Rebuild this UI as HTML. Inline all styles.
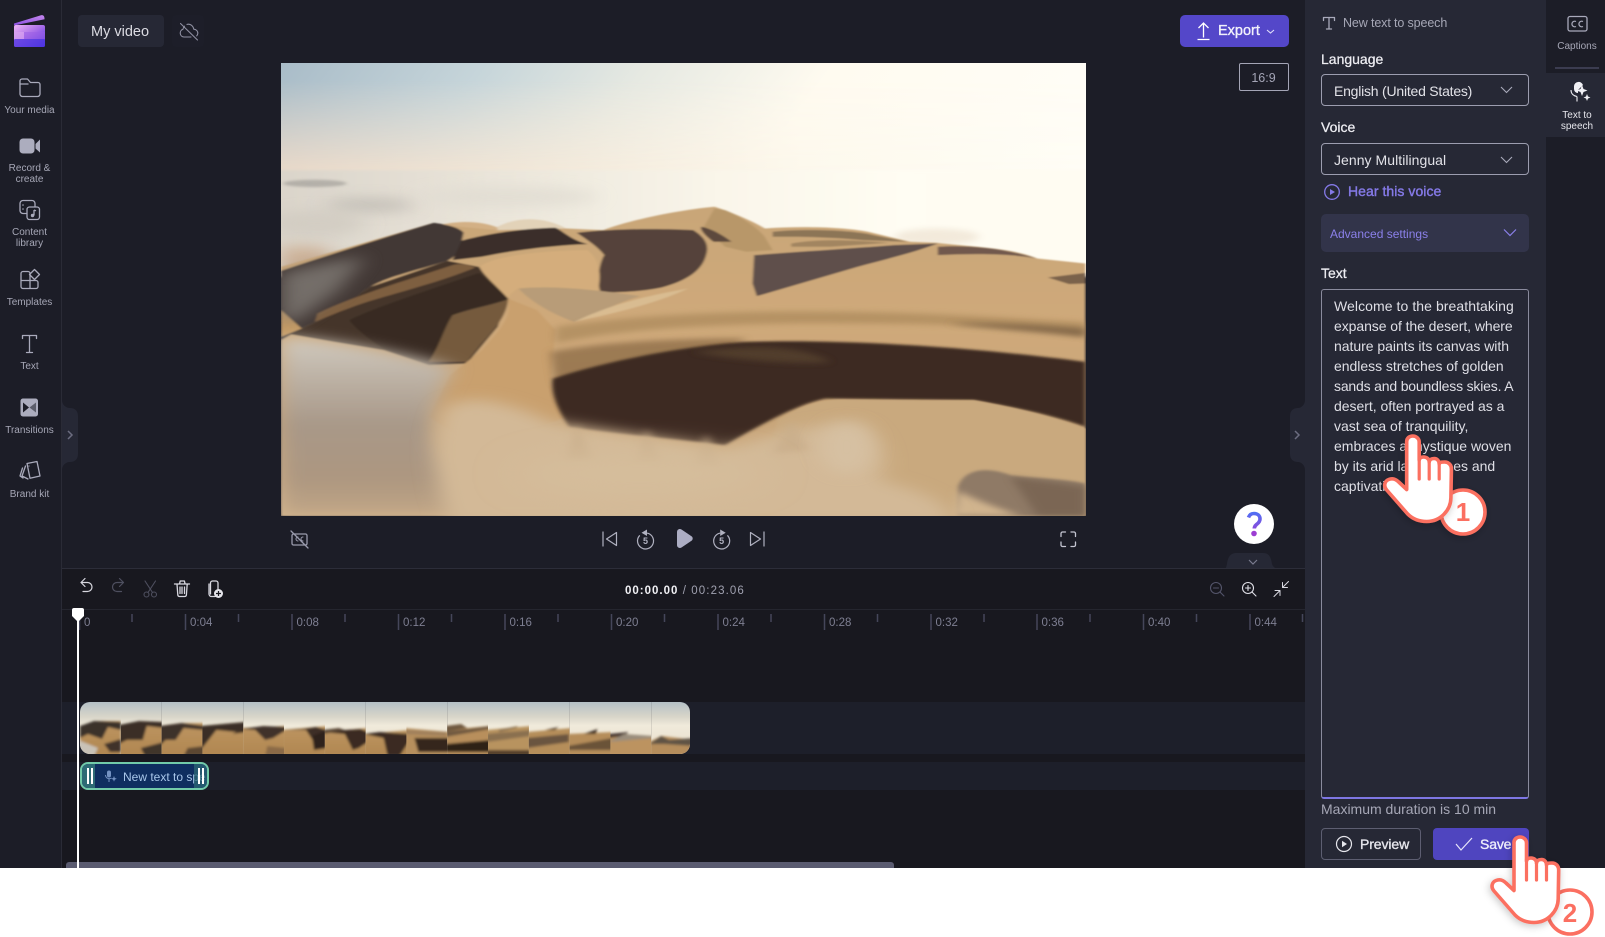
<!DOCTYPE html>
<html lang="en"><head><meta charset="utf-8"><title>Clipchamp</title>
<style>
html,body{margin:0;padding:0;background:#fff}
body{width:1605px;height:937px;position:relative;overflow:hidden;font-family:"Liberation Sans",sans-serif}
.a{position:absolute}
.t{position:absolute;white-space:nowrap}
.c{text-align:center;transform:translateX(-50%)}
.rl{font-size:10px;line-height:11px;color:#a6a7b6}
svg{position:absolute;overflow:visible}
.s{fill:none;stroke:#a9aabb;stroke-width:1.3;stroke-linecap:round;stroke-linejoin:round}
.l{font-size:14px;color:#eeeef3;line-height:18px;-webkit-text-stroke:.25px #eeeef3}
.sel{position:absolute;left:1321px;width:206px;height:30px;border:1px solid #9c9daf;border-radius:4px}
.tl{font-size:11.5px;color:#7e7f92;line-height:14px}
.ta{font-size:14px;line-height:20px;color:#dfdfe6;left:1334px}
</style></head><body>
<div class="a" style="left:0;top:0;width:1605px;height:868px;background:#1c1d27;overflow:hidden">
<div class="a" style="left:61px;top:0;width:1px;height:868px;background:#2a2b36"></div>

<svg style="left:0;top:0" width="61" height="60"><defs>
<linearGradient id="lg1" x1="0" y1="0" x2="1" y2="1"><stop offset="0" stop-color="#f0b6f5"/><stop offset=".5" stop-color="#a66be8"/><stop offset="1" stop-color="#3f2be0"/></linearGradient>
<linearGradient id="lg2" x1="0" y1="1" x2="1" y2="0"><stop offset="0" stop-color="#8a4fe0"/><stop offset="1" stop-color="#c486ee"/></linearGradient></defs>
<path d="M14 23.500L41 15.300c1.600-.5 2.900.2 3.300 1.800l.3 2.200L14 25.500z" fill="url(#lg2)"/>
<rect x="14" y="25" width="31" height="22" rx="2" fill="url(#lg1)"/>
<rect x="24" y="32" width="21" height="7" fill="#9a5fe6" opacity=".55"/>
<rect x="14" y="39" width="31" height="8" rx="1.500" fill="#5037e2" opacity=".75"/>
<rect x="14" y="32" width="10" height="7" fill="#d9a2f1" opacity=".7"/></svg>

<svg style="left:0;top:0" width="61" height="500">
<path class="s" d="M20 81a2 2 0 0 1 2-2h5.500l3 3.500H38a2 2 0 0 1 2 2V94a2.500 2.500 0 0 1-2.500 2.500h-15A2.500 2.500 0 0 1 20 94z"/>
<path class="s" d="M20 84h8"/>
<rect x="19.500" y="138.500" width="15" height="15" rx="3.500" fill="#acadbe"/><path d="M35.500 144l4.500-4.500v13l-4.500-4z" fill="#acadbe"/>
<rect class="s" x="20" y="200.500" width="15" height="13" rx="3"/><rect x="27" y="207" width="12.500" height="12.500" rx="2.500" fill="#1c1d27" stroke="#a9aabb" stroke-width="1.300"/>
<path d="M34 210v5.500" stroke="#a9aabb" stroke-width="1.300"/><circle cx="32.500" cy="215.500" r="1.700" fill="#a9aabb"/><path d="M34 210l2 .8" stroke="#a9aabb" stroke-width="1.300"/>
<circle cx="23" cy="205" r=".8" fill="#a9aabb"/><circle cx="23" cy="209" r=".8" fill="#a9aabb"/>
<path class="s" d="M30 280.500v-7a2 2 0 0 0-2-2h-5a2 2 0 0 0-2 2v13a2 2 0 0 0 2 2h13a2 2 0 0 0 2-2v-4a2 2 0 0 0-2-2zM30 280.500H21M30 280.500v8"/>
<path class="s" d="M34.500 269.500l5 5-5 5-5-5z"/>
<path class="s" d="M22.500 338.500v-3h14v3M29.500 335.500v17M26.500 352.500h6"/>
<rect x="20.500" y="398.500" width="17.500" height="18" rx="2.500" fill="#acadbe"/>
<path d="M23 402.500l6 5-6 5z" fill="#1c1d27"/><path d="M36 402.500l-6.500 5 6.500 5z" fill="#1c1d27" opacity=".55"/>
<path class="s" d="M27 463.500l10-2 3 14.500-10 2.200zM25.500 466l-3.500 10 6 3M22.500 468l-2.500 8 3 2"/>
<circle cx="29" cy="466" r=".6" fill="#a9aabb"/>
</svg>
<div class="t c rl" style="left:29.500px;top:105px">Your media</div>
<div class="t c rl" style="left:29.500px;top:163px">Record &amp;<br>create</div>
<div class="t c rl" style="left:29.500px;top:227px">Content<br>library</div>
<div class="t c rl" style="left:29.500px;top:297px">Templates</div>
<div class="t c rl" style="left:29.500px;top:361px">Text</div>
<div class="t c rl" style="left:29.500px;top:425px">Transitions</div>
<div class="t c rl" style="left:29.500px;top:489px">Brand kit</div>

<svg style="left:62px;top:400px" width="18" height="70"><path d="M0 0c0 5 4 8 8 8 5 0 8 3 8 8v38c0 5-3 8-8 8-4 0-8 3-8 8z" fill="#262835"/><path d="M6 31l4 4-4 4" fill="none" stroke="#6c6d80" stroke-width="1.500"/></svg>
<svg style="left:1290px;top:400px" width="16" height="70"><path d="M15 0c0 5-4 8-7 8-5 0-8 3-8 8v38c0 5 3 8 8 8 3 0 7 3 7 8z" fill="#262835"/><path d="M5 31l4 4-4 4" fill="none" stroke="#6c6d80" stroke-width="1.500"/></svg>

<div class="a" style="left:78px;top:15px;width:86px;height:32px;background:#262835;border-radius:4px"></div>
<div class="t" style="left:91px;top:23px;font-size:14.500px;line-height:18px;color:#dcdce3">My video</div>
<div class="a" style="left:172px;top:15px;width:32px;height:32px;background:#1d1e29;border-radius:4px"></div>
<svg style="left:0;top:0" width="240" height="60"><path class="s" style="stroke:#8f90a2;stroke-width:1.100" d="M191 37h-7a4 4 0 0 1-1-7.800c.2-1.200.7-2.200 1.500-3M187 24.400c3-.8 6 1 6.800 4.800 2.800.3 4.200 2.200 4 4.300-.1 1-.5 1.800-1.100 2.400M180.500 23.500l17 16.500"/></svg>

<div class="a" style="left:1180px;top:15px;width:109px;height:32px;background:#5447c9;border-radius:5px"></div>
<svg style="left:1180px;top:15px" width="109" height="32"><path d="M23.500 22.500V9M18.500 13l5-5 5 5M17.500 24.500h12" fill="none" stroke="#fff" stroke-width="1.300"/><path d="M87 15l3.500 3 3.500-3" fill="none" stroke="#e0defa" stroke-width="1.100"/></svg>
<div class="t" style="left:1218px;top:23px;font-size:14.500px;line-height:17px;color:#f2f1fb;-webkit-text-stroke:.35px #f2f1fb">Export</div>
<div class="a" style="left:1239px;top:63px;width:48px;height:26px;border:1px solid #a4a5b6;border-radius:2px"></div>
<div class="t c" style="left:1263.500px;top:71px;font-size:12.500px;line-height:14px;color:#a4a5b6">16:9</div>

<!-- PHOTO -->
<svg style="left:281px;top:63px" width="805" height="453" viewBox="21 39 1521 1358" preserveAspectRatio="none">
<defs>
<clipPath id="pc"><rect x="21" y="39" width="1521" height="1358"/></clipPath>
<linearGradient id="sky" x1="0" y1="0" x2="1" y2=".12"><stop offset="0" stop-color="#a9bcc8"/><stop offset=".25" stop-color="#c6d5da"/><stop offset=".45" stop-color="#e6e9e2"/><stop offset=".68" stop-color="#fffbf0"/><stop offset="1" stop-color="#fffdf6"/></linearGradient>
<linearGradient id="fog" x1="0" y1="0" x2="1" y2="0"><stop offset="0" stop-color="#d8d2c8"/><stop offset=".3" stop-color="#ebe6db"/><stop offset=".55" stop-color="#faf6ea"/><stop offset=".75" stop-color="#fffdf3"/><stop offset="1" stop-color="#fffcf2"/></linearGradient>
<linearGradient id="fogh" x1="0" y1="0" x2="1" y2="0"><stop offset="0" stop-color="#ead9c8"/><stop offset=".35" stop-color="#f3e9da"/><stop offset=".65" stop-color="#fdf8ec"/><stop offset="1" stop-color="#fffdf5"/></linearGradient>
<linearGradient id="mg" gradientUnits="userSpaceOnUse" x1="0" y1="90" x2="0" y2="370"><stop offset="0" stop-color="#fff" stop-opacity="0"/><stop offset="1" stop-color="#fff"/></linearGradient>
<mask id="skm" maskUnits="userSpaceOnUse" x="0" y="0" width="1600" height="500"><rect x="0" y="0" width="1600" height="500" fill="url(#mg)"/></mask>
<linearGradient id="sand" gradientUnits="userSpaceOnUse" x1="0" y1="500" x2="0" y2="1397"><stop offset="0" stop-color="#c9a678"/><stop offset=".35" stop-color="#cfa97a"/><stop offset=".7" stop-color="#c8a579"/><stop offset="1" stop-color="#d7b88f"/></linearGradient>
<linearGradient id="lfog" gradientUnits="userSpaceOnUse" x1="0" y1="850" x2="0" y2="1397"><stop offset="0" stop-color="#d2ccc1"/><stop offset=".25" stop-color="#bcb1a4"/><stop offset=".5" stop-color="#a89888"/><stop offset=".8" stop-color="#ad9780"/><stop offset="1" stop-color="#c2a787"/></linearGradient>
<filter id="b2" filterUnits="userSpaceOnUse" x="-200" y="-200" width="2000" height="1900"><feGaussianBlur stdDeviation="2.500"/></filter>
<filter id="b3" filterUnits="userSpaceOnUse" x="-200" y="-200" width="2000" height="1900"><feGaussianBlur stdDeviation="4"/></filter>
<filter id="b8" filterUnits="userSpaceOnUse" x="-200" y="-200" width="2000" height="1900"><feGaussianBlur stdDeviation="9"/></filter>
<filter id="b20" filterUnits="userSpaceOnUse" x="-200" y="-200" width="2000" height="1900"><feGaussianBlur stdDeviation="20"/></filter>
<filter id="b40" filterUnits="userSpaceOnUse" x="-200" y="-200" width="2000" height="1900"><feGaussianBlur stdDeviation="40"/></filter>
</defs>
<g clip-path="url(#pc)">
<rect x="21" y="39" width="1521" height="400" fill="url(#sky)"/>
<rect x="21" y="39" width="1521" height="400" fill="url(#fogh)" mask="url(#skm)"/>
<rect x="-40" y="360" width="1640" height="320" fill="url(#fog)" filter="url(#b3)"/>
<ellipse cx="85" cy="400" rx="60" ry="11" fill="#8c8a86" filter="url(#b3)" opacity=".5"/>
<ellipse cx="190" cy="465" rx="85" ry="20" fill="#bbb7b0" filter="url(#b20)" opacity=".8"/>
<ellipse cx="450" cy="440" rx="170" ry="30" fill="#e0dcd2" filter="url(#b20)" opacity=".8"/>
<ellipse cx="90" cy="520" rx="90" ry="40" fill="#cfc9bf" filter="url(#b20)" opacity=".7"/>
<path d="M21 590L100 590 130 640 21 680z" fill="#c9a88a" filter="url(#b20)" opacity=".8"/>
<ellipse cx="1260" cy="560" rx="80" ry="25" fill="#f3eadb" filter="url(#b8)"/>
<g filter="url(#b2)">
<path d="M320 525C360 510 410 512 440 540L440 560 320 560z" fill="#d3b085"/>
<path d="M430 530C470 498 520 500 560 535L560 560 430 560z" fill="#e2d2b8"/>
<path d="M21 650L305 520 360 530 430 540 560 535 630 540C680 510 770 480 840 470 880 490 920 520 935 535 1000 528 1080 530 1130 545L1210 575 1260 578C1320 590 1400 592 1450 625L1541 640V1397H21Z" fill="url(#sand)"/>
<path d="M860 480C890 500 920 530 935 560L950 600 900 605 860 590 820 530 840 475z" fill="#b89769"/>
<path d="M950 545C1010 535 1100 540 1140 555L1205 575 1120 570C1050 560 1000 560 950 560z" fill="#8c7457"/>
<path d="M985 580C1040 565 1100 570 1170 578L1060 590 985 590z" fill="#a28560"/>
<path d="M30 850L60 835 100 805 190 710 335 632 395 650 450 745 430 830 372 940 300 945 215 900 120 875Z" fill="#443529"/>
<path d="M21 662C120 610 220 560 310 518 340 525 360 535 366 548L360 590C355 610 345 625 335 632 280 660 220 680 190 710 160 740 130 780 100 805L60 835 21 870Z" fill="#423936"/>
<path d="M362 572C400 555 470 535 540 533 555 545 570 570 600 582 540 585 460 600 400 620L345 630Z" fill="#3a2f2a"/>
<path d="M580 548C650 535 740 535 800 540 820 560 830 580 825 610 818 660 790 690 740 712 700 725 650 728 625 725 615 690 625 630 632 615 620 590 600 570 580 548Z" fill="#54433b"/>
<path d="M815 530C835 535 860 560 872 575L838 575C825 560 812 540 815 530Z" fill="#5d4a3c"/>
<path d="M915 615C1000 605 1100 595 1180 585L1262 580C1220 605 1170 625 1110 650L920 738 912 700Z" fill="#5f4f4b"/>
<path d="M1262 590C1310 585 1380 590 1448 625 1400 610 1330 610 1262 615Z" fill="#71584d"/>
<path d="M1470 682L1541 668V700L1510 702Z" fill="#7a624b"/>
<path d="M90 790C160 735 260 690 345 645 360 638 378 645 388 652 340 685 260 720 190 752 150 772 115 795 85 815Z" fill="#7e5e41"/>
<path d="M150 810C200 770 300 720 395 668 410 690 435 720 450 745 400 770 360 780 345 795 330 830 320 890 300 935 270 925 235 905 215 895 190 870 165 840 150 810Z" fill="#382c24"/>
<path d="M345 795C380 775 420 765 450 748 448 790 430 830 400 880L372 935 300 935C320 890 330 830 345 795Z" fill="#755a3e"/>
<path d="M21 780L60 835 21 860Z" fill="#c79a60"/>
<path d="M396 650C420 620 500 602 600 600 632 640 622 700 620 725 560 710 500 710 468 715 455 730 450 740 450 745 430 710 400 670 396 650Z" fill="#d4ad7b"/>
<path d="M450 745C456 800 440 830 400 900L340 975 300 1100 400 1200 560 1100 530 1000 540 840 505 780Z" fill="#c9a06e"/>
<path d="M470 715C540 705 620 720 700 738 660 755 620 790 575 815 530 790 490 750 470 715Z" fill="#b89c78"/>
<path d="M575 815C620 780 680 745 790 715 730 760 650 790 575 815Z" fill="#dcc097" opacity=".8"/>
</g>
<path d="M21 670L100 640 180 620 130 720 60 800 21 830z" fill="#85807a" filter="url(#b20)" opacity=".75"/>
<path d="M540 830C700 790 900 780 1100 785 1300 790 1450 810 1541 815V860C1400 820 1200 820 1000 820 800 825 650 840 540 880Z" fill="#a78658" filter="url(#b8)" opacity=".65"/>
<path d="M1280 820C1360 815 1460 825 1541 835V860C1450 845 1360 835 1280 820Z" fill="#6f573d" filter="url(#b8)" opacity=".7"/>
<path d="M530 905C650 870 800 865 900 865L800 965 540 1005Z" fill="#8c6c47" filter="url(#b8)" opacity=".75"/>
<path d="M535 985C650 925 800 885 900 875 1100 865 1350 895 1541 935V1130C1490 1100 1420 1075 1330 1050L1050 1045C1000 1060 930 1120 860 1185 760 1165 640 1150 565 1130 540 1070 530 1020 535 985Z" fill="#3d2c20" filter="url(#b3)"/>
<path d="M800 905C900 885 1000 880 1060 935 1000 945 880 930 800 905Z" fill="#57432f" filter="url(#b8)" opacity=".8"/>
<path d="M960 1110C1000 1070 1040 1045 1090 1048 1200 1050 1300 1050 1330 1050 1420 1075 1490 1105 1541 1135V1397H900Z" fill="#c9a97e" filter="url(#b2)"/>
<path d="M1300 1310C1310 1260 1350 1245 1400 1275 1450 1285 1500 1285 1541 1300V1397H1300Z" fill="#8f7a66" filter="url(#b3)"/>
<path d="M1300 1320C1320 1340 1370 1370 1420 1397H1290Z" fill="#d0b48e" filter="url(#b8)"/>
<path d="M1400 1280C1450 1290 1500 1300 1541 1310V1397H1450Z" fill="#6e5a4a" filter="url(#b8)" opacity=".6"/>
<!-- fog -->
<path d="M21 860C120 870 220 900 345 950 310 1040 290 1130 330 1220 370 1300 430 1397 450 1397H21Z" fill="url(#lfog)" filter="url(#b20)"/>
<path d="M330 1070C390 1020 470 1070 540 1120 640 1140 760 1175 860 1205 930 1160 1020 1110 1120 1125 1160 1170 1170 1240 1150 1290 1230 1320 1290 1360 1290 1420H340C310 1300 300 1150 330 1070Z" fill="#d3b997" filter="url(#b20)"/>
<path d="M560 1230L580 1120 610 1230ZM690 1240L712 1135 740 1240ZM800 1250L825 1150 850 1250ZM950 1210L985 1110 1020 1200Z" fill="#c9ae8b" filter="url(#b8)" opacity=".8"/>
<ellipse cx="1090" cy="1190" rx="50" ry="80" fill="#d8c4a8" filter="url(#b20)" opacity=".65"/>
<ellipse cx="700" cy="1270" rx="230" ry="70" fill="#d5bd9b" filter="url(#b40)"/>
</g></svg>

<!-- player controls -->
<svg style="left:0;top:0" width="1300" height="568">
<g style="stroke:#9a9bad" class="s"><rect x="292" y="534" width="15" height="11" rx="1.500"/><path d="M291 531l17 17"/><path d="M298 537a2 2 0 1 0 0 4M303 537a2 2 0 1 0 0 4" stroke-width="1"/></g>
<g class="s" style="stroke:#b0b1c0;stroke-width:1.200"><path d="M603 532v14M616.500 532.500v13l-10-6.500z"/>
<path d="M750.500 532.500v13l10-6.500zM764 532v14"/>
<path d="M647.500 533.200A8 8 0 1 1 639.500 535.700"/><path d="M719.700 533.200A8 8 0 1 0 727.700 535.700"/></g>
<path d="M647 529.500l-5.500 3.200 5.500 3.300z" fill="#b0b1c0"/><path d="M720.200 529.500l5.500 3.200-5.500 3.300z" fill="#b0b1c0"/>
<path d="M677 532c0-2.500 2.500-3.700 4.500-2.500l10 6.800c1.600 1.100 1.600 3.300 0 4.400l-10 6.800c-2 1.200-4.500 0-4.500-2.500z" fill="#acadc3"/>
<g class="s" style="stroke:#c4c5d2"><path d="M1061 536.500v-3a1.500 1.500 0 0 1 1.500-1.500h3M1071 532h3a1.500 1.500 0 0 1 1.500 1.500v3M1075.500 542v3a1.500 1.500 0 0 1-1.500 1.500h-3M1065.500 546.500h-3a1.500 1.500 0 0 1-1.500-1.500v-3"/></g>
</svg>
<div class="t c" style="left:645.500px;top:536px;font-size:9px;line-height:10px;font-weight:bold;color:#b0b1c0">5</div>
<div class="t c" style="left:721.700px;top:536px;font-size:9px;line-height:10px;font-weight:bold;color:#b0b1c0">5</div>

<!-- help -->
<div class="a" style="left:1234px;top:504px;width:40px;height:40px;border-radius:50%;background:#fff"></div>
<svg style="left:1234px;top:504px" width="40" height="40"><defs><linearGradient id="q" gradientUnits="userSpaceOnUse" x1="0" y1="8" x2="0" y2="32"><stop offset="0" stop-color="#4f70f5"/><stop offset="1" stop-color="#a03ad0"/></linearGradient></defs>
<path d="M14.500 13.500C15.500 10.500 17.500 9.500 20 9.500c3.500 0 6 2.200 6 5.500 0 3-2 4.200-3.500 5.500-1.200 1-2.200 2-2.200 4" fill="none" stroke="url(#q)" stroke-width="3.600"/><circle cx="20" cy="29.500" r="2.800" fill="#9c3dd2"/></svg>
<svg style="left:1222px;top:552px" width="62" height="17"><path d="M0 17c5 0 4-2 5-5 1-7 3-11 10-11h26c6 0 8 4 9 11 1 3 3 5 9 5z" fill="#262835"/><path d="M27 8l4 4 4-4" fill="none" stroke="#7a7b8e" stroke-width="1.200"/></svg>

<!-- timeline -->
<div class="a" style="left:62px;top:568px;width:1243px;height:300px;background:#18181f"></div>
<div class="a" style="left:62px;top:568px;width:1243px;height:1px;background:#2c2d39"></div>
<div class="a" style="left:62px;top:609px;width:1243px;height:1px;background:#25262f"></div>
<div class="a" style="left:62px;top:702px;width:1243px;height:52px;background:#1d1f2a"></div>
<div class="a" style="left:62px;top:762px;width:1243px;height:28px;background:#1d1f2a"></div>
<svg style="left:0;top:560px" width="1305" height="50">
<g class="s" style="stroke:#d8d8e0;stroke-width:1.200"><path d="M81 22.500l4-4M81 22.500l4 4M81 22.500h6.500a4.500 4.500 0 0 1 0 9H83"/></g>
<g class="s" style="stroke:#4e4f5f;stroke-width:1.200"><path d="M123.500 22.500l-4-4M123.500 22.500l-4 4M123.500 22.500H117a4.500 4.500 0 0 0 0 9h4.500"/></g>
<g class="s" style="stroke:#4e4f5f;stroke-width:1.100"><path d="M145 21l7.500 11.500M155.500 21L148 32.500"/><circle cx="146.500" cy="34.500" r="2.500"/><circle cx="154" cy="34.500" r="2.500"/></g>
<g class="s" style="stroke:#d8d8e0"><path d="M174.500 24h15M177 24l.8 11a1.800 1.800 0 0 0 1.800 1.500h5a1.800 1.800 0 0 0 1.800-1.500l.8-11M179.500 24l.7-3h4.200l.7 3M180 27v6.500M182 27v6.500M184.500 27v6.500"/></g>
<g class="s" style="stroke:#d8d8e0"><path d="M215 36.500h-3.500a2.500 2.500 0 0 1-2.500-2.500V24M210.500 34V23a2 2 0 0 1 2-2h3.500a2 2 0 0 1 2 2v6"/></g>
<circle cx="218.500" cy="33.500" r="4.500" fill="#e4e4ea"/><path d="M218.500 31v5M216 33.500h5" stroke="#18181f" stroke-width="1.200"/>
<g class="s" style="stroke:#53546a;stroke-width:1.100"><circle cx="1216" cy="28" r="5.500"/><path d="M1213.500 28h5M1220 32l4 4"/></g>
<g class="s" style="stroke:#e0e0e8;stroke-width:1.100"><circle cx="1248" cy="28" r="5.500"/><path d="M1245.500 28h5M1248 25.500v5M1252 32l4 4"/></g>
<g class="s" style="stroke:#d8d8e0;stroke-width:1"><path d="M1288.500 21.500l-6 6M1282.500 22.500v5h5M1274 36.500l6-6M1275 30.500h5v5"/></g>
</svg>
<div class="t" style="left:625px;top:584px;font-size:11.500px;line-height:14px;letter-spacing:1.100px;color:#a0a1b0"><span style="color:#f1f1f5;font-weight:bold;letter-spacing:1px">00:00.00</span> / 00:23.06</div>

<svg style="left:0;top:610px" width="1305" height="24"><g stroke="#45465a" stroke-width="1.500">
<path d="M79.500 5v15M185.500 4v16M292 4v16M398.500 4v16M505 4v16M611.500 4v16M718 4v16M824.500 4v16M931 4v16M1037 4v16M1143.500 4v16M1250 4v16"/>
<path d="M132 4v8M238.500 4v8M345 4v8M451.500 4v8M558 4v8M664.500 4v8M771 4v8M877.500 4v8M984 4v8M1090 4v8M1196.500 4v8M1302.500 4v8"/></g></svg>
<div class="t tl" style="left:84px;top:615.500px">0</div>
<div class="t tl" style="left:190px;top:615.500px">0:04</div><div class="t tl" style="left:296.500px;top:615.500px">0:08</div><div class="t tl" style="left:403px;top:615.500px">0:12</div><div class="t tl" style="left:509.500px;top:615.500px">0:16</div><div class="t tl" style="left:616px;top:615.500px">0:20</div><div class="t tl" style="left:722.500px;top:615.500px">0:24</div><div class="t tl" style="left:829px;top:615.500px">0:28</div><div class="t tl" style="left:935.500px;top:615.500px">0:32</div><div class="t tl" style="left:1041.500px;top:615.500px">0:36</div><div class="t tl" style="left:1148px;top:615.500px">0:40</div><div class="t tl" style="left:1254.500px;top:615.500px">0:44</div>

<!-- clip -->
<svg style="left:80px;top:702px" width="610" height="52" viewBox="0 0 610 52"><defs>
<clipPath id="cc"><rect width="610" height="52" rx="10"/></clipPath>
<linearGradient id="ts" x1="0" y1="0" x2="0" y2="1"><stop offset="0" stop-color="#b4c0c6"/><stop offset=".28" stop-color="#d8d5c9"/><stop offset=".45" stop-color="#f0eadb"/><stop offset="1" stop-color="#e9dfcb"/></linearGradient>
<linearGradient id="ss" x1="0" y1="0" x2="0" y2="1"><stop offset="0" stop-color="#bd9561"/><stop offset="1" stop-color="#b08650"/></linearGradient>
<filter id="tb" x="-10%" y="-10%" width="120%" height="120%"><feGaussianBlur stdDeviation="1.400"/></filter>
<clipPath id="t0"><rect width="41" height="52"/></clipPath>
</defs>
<g clip-path="url(#cc)">
<g clip-path="url(#t0)"><rect width="41" height="52" fill="url(#ts)"/><g filter="url(#tb)"><path d="M0 26L14 19 41 19V54H0Z" fill="url(#ss)"/><path d="M0 24L14 19 41 20V28L28 25 22 37 8 32 0 36Z" fill="#3b322c"/><path d="M24 42L41 37V50H30Z" fill="#40332a"/><path d="M-2 38L18 46 14 54H-2Z" fill="#c9c2b7"/></g></g>
<g transform="translate(40.800)" clip-path="url(#t0)"><rect width="41" height="52" fill="url(#ts)"/><g filter="url(#tb)"><path d="M-2 24L18 19 43 20V54H-2Z" fill="url(#ss)"/><path d="M-2 23L18 19 43 20V26L26 24 22 38 6 38-2 42Z" fill="#3b2f28"/><path d="M20 46L43 40V54H24Z" fill="#41342a"/></g></g>
<g transform="translate(81.600)" clip-path="url(#t0)"><rect width="41" height="52" fill="url(#ts)"/><g filter="url(#tb)"><path d="M-2 24L20 21 43 21V54H-2Z" fill="url(#ss)"/><path d="M-2 24L20 21 43 24V28L22 26 14 38 4 38-2 44Z" fill="#3d3029"/><path d="M26 46L43 44V54H22Z" fill="#5b4633"/></g></g>
<g transform="translate(122.400)" clip-path="url(#t0)"><rect width="41" height="52" fill="url(#ts)"/><g filter="url(#tb)"><path d="M-2 24L43 20V54H-2Z" fill="url(#ss)"/><path d="M-2 24L20 22 43 20V26L34 30 14 28 3 42-2 48Z" fill="#3a2e27"/><path d="M30 32L43 26V30Z" fill="#2e241e"/></g></g>
<g transform="translate(163.200)" clip-path="url(#t0)"><rect width="41" height="52" fill="url(#ts)"/><g filter="url(#tb)"><path d="M-2 26L43 24V54H-2Z" fill="url(#ss)"/><path d="M-2 27L20 24 43 25V28L30 36 22 38 12 28Z" fill="#3f3229"/><path d="M24 44L43 46V54H22Z" fill="#8b6b46"/></g></g>
<g transform="translate(204)" clip-path="url(#t0)"><rect width="41" height="52" fill="url(#ts)"/><g filter="url(#tb)"><path d="M-2 28L43 24V54H-2Z" fill="url(#ss)"/><path d="M-2 28L18 27 32 25 43 28V36L30 40 22 28Z" fill="#3c2e25"/><path d="M28 34L43 28V46L30 48Z" fill="#2f241d"/></g></g>
<g transform="translate(244.800)" clip-path="url(#t0)"><rect width="41" height="52" fill="url(#ts)"/><g filter="url(#tb)"><path d="M-2 30L43 26V54H-2Z" fill="url(#ss)"/><path d="M-2 30L20 28 36 27 43 30V40L34 46 28 48 20 32Z" fill="#3a2c23"/><path d="M-2 28L14 26 20 28-2 32Z" fill="#5a4736"/></g></g>
<g transform="translate(285.600)" clip-path="url(#t0)"><rect width="41" height="52" fill="url(#ts)"/><g filter="url(#tb)"><path d="M-2 32L43 28V54H-2Z" fill="url(#ss)"/><path d="M-2 32L14 30 43 32V40L34 54H22L18 36Z" fill="#3a2c22"/></g></g>
<g transform="translate(326.400)" clip-path="url(#t0)"><rect width="41" height="52" fill="url(#ts)"/><g filter="url(#tb)"><path d="M-2 26L43 30V54H-2Z" fill="#b68f5d"/><path d="M8 36L43 36V50H12Z" fill="#35281e"/><path d="M-2 28L40 30V34L-2 32Z" fill="#a0805c"/></g></g>
<g transform="translate(367.200)" clip-path="url(#t0)"><rect width="41" height="52" fill="url(#ts)"/><g filter="url(#tb)"><path d="M-2 28L43 24V54H-2Z" fill="#b88f5c"/><path d="M-2 42L43 38V50H-2Z" fill="#2f2319"/><path d="M-2 24L14 22 20 26-2 30ZM-2 30L43 24V27L-2 35Z" fill="#6f593f"/></g></g>
<g transform="translate(408)" clip-path="url(#t0)"><rect width="41" height="52" fill="url(#ts)"/><g filter="url(#tb)"><path d="M-2 28L43 24V54H-2Z" fill="#b8935f"/><path d="M-2 48H43V54H-2Z" fill="#55402c"/><path d="M10 28L30 24 28 26 12 30ZM-2 32L43 28V34L-2 40Z" fill="#8a7050"/></g></g>
<g transform="translate(448.800)" clip-path="url(#t0)"><rect width="41" height="52" fill="url(#ts)"/><g filter="url(#tb)"><path d="M-2 30L43 26V54H-2Z" fill="#b58e5a"/><path d="M-2 36L40 32V40L-2 46Z" fill="#6b5540"/><path d="M16 28L30 25 26 28Z" fill="#4b3b2d"/></g></g>
<g transform="translate(489.600)" clip-path="url(#t0)"><rect width="41" height="52" fill="url(#ts)"/><g filter="url(#tb)"><path d="M-2 32L43 30V54H-2Z" fill="#b58d5a"/><path d="M-2 44L43 36V48H-2Z" fill="#6b5238"/><path d="M14 32L28 27 26 32Z" fill="#3f3127"/></g></g>
<g transform="translate(530.400)" clip-path="url(#t0)"><rect width="41" height="52" fill="url(#ts)"/><g filter="url(#tb)"><path d="M-2 34L43 34V54H-2Z" fill="#bc9360"/><path d="M-2 32L18 30 14 34-2 36Z" fill="#463730"/><path d="M14 32L43 34V36L-2 40Z" fill="#9a8d7b"/></g></g>
<g transform="translate(571.200)" clip-path="url(#t0)"><rect width="41" height="52" fill="url(#ts)"/><g filter="url(#tb)"><path d="M-2 40L10 34 43 38V54H-2Z" fill="#b58d5b"/><path d="M-2 42L10 34 18 38 43 36V44L14 42Z" fill="#5f5245"/></g></g>
</g></svg>

<!-- text clip -->
<div class="a" style="left:80px;top:762px;width:129px;height:28px;box-sizing:border-box;border:2px solid #72caa9;border-radius:8px;overflow:hidden;background:#0f2e60">
<div class="t" style="left:41px;top:6px;font-size:12px;line-height:14px;color:#a9c7ea;width:84px;overflow:hidden">New text to spe</div>
<div class="a" style="left:0;top:0;width:13px;height:24px;background:#2d6a75"></div>
<div class="a" style="right:0;top:0;width:13px;height:24px;background:rgba(45,106,117,.72)"></div>
<div class="a" style="left:5px;top:4px;width:2px;height:16px;background:#fff"></div><div class="a" style="left:9px;top:4px;width:2px;height:16px;background:#fff"></div>
<div class="a" style="left:116px;top:4px;width:2px;height:16px;background:#fff"></div><div class="a" style="left:120px;top:4px;width:2px;height:16px;background:#fff"></div>
<svg style="left:22px;top:4px" width="16" height="16"><path d="M5 2.500a2 2 0 0 1 2 2v3a2 2 0 0 1-4 0v-3a2 2 0 0 1 2-2z" fill="#7492c2"/><path d="M1.500 7a3.800 3.800 0 0 0 6 3M5 11v3" stroke="#7492c2" fill="none"/><path d="M10 8l.8 2 2 .8-2 .8-.8 2-.8-2-2-.8 2-.8z" fill="#7492c2"/></svg>
</div>

<div class="a" style="left:77px;top:618px;width:2px;height:250px;background:#fff"></div>
<svg style="left:72px;top:608px" width="12" height="14"><path d="M0 2a2 2 0 0 1 2-2h8a2 2 0 0 1 2 2v6l-6 6-6-6z" fill="#fff"/></svg>
<div class="a" style="left:66px;top:862px;width:828px;height:6px;background:#5a5b70;border-radius:3px 3px 0 0"></div>
<div class="a" style="left:77px;top:862px;width:2px;height:6px;background:#fff"></div>

<!-- right panel -->
<div class="a" style="left:1305px;top:0;width:241px;height:868px;background:#262835"></div>
<svg style="left:1305px;top:0" width="40" height="40"><path class="s" d="M18.500 20.500v-3h11v3M24 17.500v11.500M21.500 29h5"/></svg>
<div class="t" style="left:1343px;top:16px;font-size:12.500px;line-height:15px;letter-spacing:-.12px;color:#a6a7b6">New text to speech</div>
<div class="t l" style="left:1321px;top:50px">Language</div>
<div class="sel" style="top:74px"></div>
<div class="t" style="left:1334px;top:82px;font-size:14px;line-height:18px;letter-spacing:-.22px;color:#e2e2e8">English (United States)</div>
<svg style="left:1500px;top:85px" width="14" height="10"><path d="M1 2l5.500 5.500L12 2" fill="none" stroke="#a9aabb" stroke-width="1.100"/></svg>
<div class="t l" style="left:1321px;top:118px">Voice</div>
<div class="sel" style="top:143px"></div>
<div class="t" style="left:1334px;top:150.500px;font-size:14px;line-height:18px;letter-spacing:.05px;color:#e2e2e8">Jenny Multilingual</div>
<svg style="left:1500px;top:155px" width="14" height="10"><path d="M1 2l5.500 5.500L12 2" fill="none" stroke="#a9aabb" stroke-width="1.100"/></svg>
<svg style="left:1324px;top:184px" width="17" height="17"><circle cx="8" cy="8" r="7.300" fill="none" stroke="#857ae8" stroke-width="1.300"/><path d="M6 5l5 3-5 3z" fill="#857ae8"/></svg>
<div class="t" style="left:1348px;top:183px;font-size:14px;line-height:17px;letter-spacing:.05px;color:#8479e6;-webkit-text-stroke:.4px #8479e6">Hear this voice</div>
<div class="a" style="left:1321px;top:214px;width:208px;height:38px;background:#32344a;border-radius:5px"></div>
<div class="t" style="left:1330px;top:226.500px;font-size:12px;line-height:15px;color:#8b80ea">Advanced settings</div>
<svg style="left:1503px;top:228px" width="14" height="10"><path d="M1 1.500l6 6 6-6" fill="none" stroke="#8b80ea" stroke-width="1.200"/></svg>
<div class="t l" style="left:1321px;top:264px">Text</div>
<div class="a" style="left:1321px;top:289px;width:206px;height:507px;border:1px solid #8a8b9d;border-bottom:2px solid #7e77e3;border-radius:3px"></div>
<div class="t ta" style="top:296px;letter-spacing:.07px">Welcome to the breathtaking</div>
<div class="t ta" style="top:316px;letter-spacing:-.07px">expanse of the desert, where</div>
<div class="t ta" style="top:336px;letter-spacing:-.03px">nature paints its canvas with</div>
<div class="t ta" style="top:356px;letter-spacing:-.03px">endless stretches of golden</div>
<div class="t ta" style="top:376px;letter-spacing:-.18px">sands and boundless skies. A</div>
<div class="t ta" style="top:396px;letter-spacing:-.03px">desert, often portrayed as a</div>
<div class="t ta" style="top:416px">vast sea of tranquility,</div>
<div class="t ta" style="top:436px">embraces a mystique woven</div>
<div class="t ta" style="top:456px;letter-spacing:-.03px">by its arid landscapes and</div>
<div class="t ta" style="top:476px">captivating</div>
<div class="t" style="left:1321px;top:800px;font-size:14px;line-height:18px;color:#a6a7b6">Maximum duration is 10 min</div>
<div class="a" style="left:1321px;top:828px;width:98px;height:30px;border:1px solid #5d5e71;border-radius:4px"></div>
<svg style="left:1335px;top:835px" width="18" height="18"><circle cx="9" cy="9" r="7.500" fill="none" stroke="#e6e6ec" stroke-width="1.200"/><path d="M7 5.800l5 3.200-5 3.200z" fill="#e6e6ec"/></svg>
<div class="t" style="left:1360px;top:835px;font-size:14px;line-height:18px;letter-spacing:-.1px;color:#e6e6ec;-webkit-text-stroke:.35px #e6e6ec">Preview</div>
<div class="a" style="left:1433px;top:828px;width:96px;height:32px;background:#4f45bf;border-radius:4px"></div>
<svg style="left:1455px;top:836px" width="18" height="16"><path d="M1 8l5 6L17 2" fill="none" stroke="#e8e6fa" stroke-width="1.200"/></svg>
<div class="t" style="left:1480px;top:835px;font-size:14px;line-height:18px;letter-spacing:-.15px;color:#efeefb;-webkit-text-stroke:.35px #efeefb">Save</div>

<!-- right rail -->
<div class="a" style="left:1546px;top:73px;width:59px;height:64px;background:#262835"></div>
<div class="a" style="left:1555px;top:67px;width:44px;height:2px;background:#3b3c50"></div>
<svg style="left:1546px;top:0" width="59" height="120"><rect x="22" y="16.500" width="19" height="14.500" rx="2" fill="none" stroke="#a9aabb" stroke-width="1.300"/><path d="M30 21.500a2.800 2.800 0 1 0 0 5M37 21.500a2.800 2.800 0 1 0 0 5" fill="none" stroke="#a9aabb" stroke-width="1.200"/>
<path d="M32 82a4.500 4.500 0 0 1 5 3l-5 5v3a4 4 0 0 1-4-4v-3a4.500 4.500 0 0 1 4-4z" fill="#f0f0f5"/><path d="M25 90c0 4 3 6 6 6.500M31 96.500v5" fill="none" stroke="#f0f0f5" stroke-width="1.100"/>
<path d="M36 85l1.500 4 4 1.500-4 1.500-1.500 4-1.500-4-4-1.500 4-1.500z" fill="#f0f0f5"/><path d="M41 94l1 2.500 2.500 1-2.500 1-1 2.500-1-2.500-2.500-1 2.500-1z" fill="#f0f0f5"/></svg>
<div class="t c rl" style="left:1577px;top:41px">Captions</div>
<div class="t c rl" style="left:1577px;top:110px;color:#e6e6ec">Text to<br>speech</div>
</div>

<!-- hands -->
<svg style="left:0;top:0" width="1605" height="937"><defs>
<filter id="hs" x="-30%" y="-30%" width="160%" height="160%"><feDropShadow dx="-1" dy="2" stdDeviation="4" flood-color="#000" flood-opacity=".22"/></filter>
<g id="hand"><path d="M-6 48L-6 5.500C-6 2-3 0 0 0 3.500 0 6.500 2.500 6.500 6L6.500 24C7 21.500 9 21 11 21 14 21 16.500 23 16.500 26 17 23 19 22.500 21.500 22.500 24.500 22.500 26.500 25 26.500 28 27 26 29 26 32 26 36 26 38.700 29 38.700 33L38.200 62C38 74 28 85.500 14 85.500 6 85.500 0 83-5 78L-26 54C-29.500 50-28 45-24 43.500-20.500 42-17 43-14 46L-6 53.500Z" fill="#fff" stroke="#fb6f61" stroke-width="3.600" stroke-linejoin="round"/><path d="M6.500 22V43M16.500 26V43M26.500 29V43" stroke="#fb6f61" stroke-width="3.200" stroke-linecap="round" fill="none"/></g></defs>
<circle cx="1463" cy="512" r="22" fill="#fff" stroke="#fb6f61" stroke-width="3.600" filter="url(#hs)"/>
<use href="#hand" x="1412.700" y="436" filter="url(#hs)"/>
<circle cx="1570" cy="912" r="22" fill="#fff" stroke="#fb6f61" stroke-width="3.600"/>
<use href="#hand" x="1520" y="837" filter="url(#hs)"/>
</svg>
<div class="t c" style="left:1463px;top:497px;font-size:26px;line-height:30px;font-weight:bold;color:#fb6f61">1</div>
<div class="t c" style="left:1570px;top:898px;font-size:26px;line-height:30px;font-weight:bold;color:#fb6f61">2</div>
</body></html>
